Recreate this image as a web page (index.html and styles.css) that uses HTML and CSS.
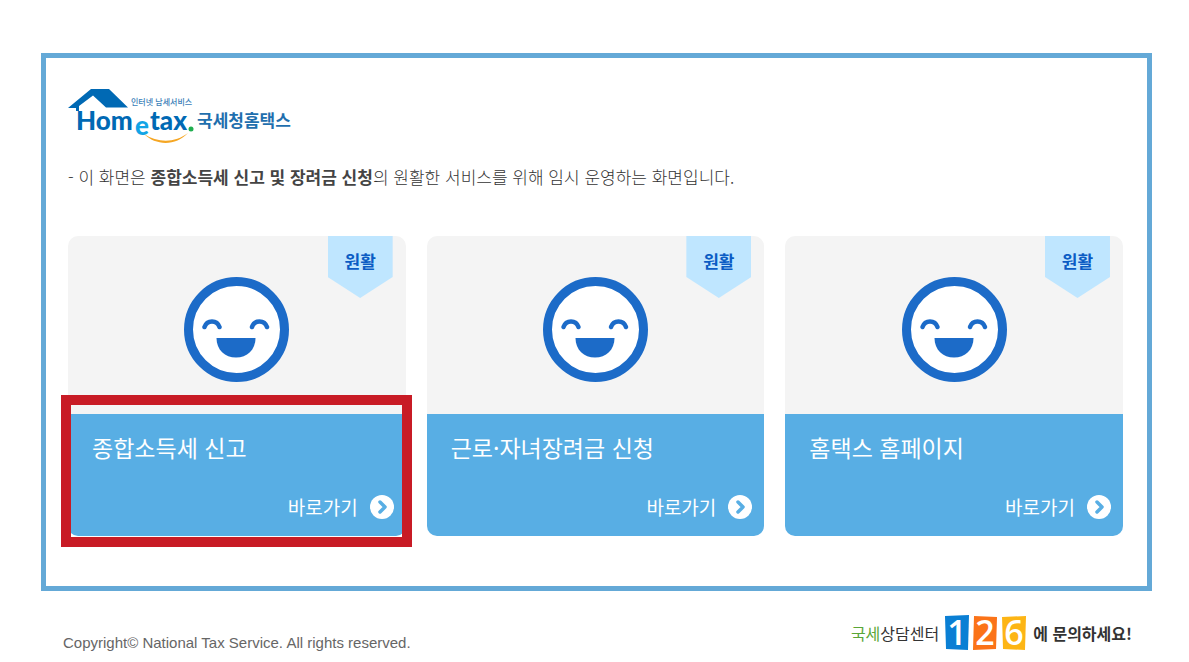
FILE: index.html
```html
<!DOCTYPE html>
<html lang="ko">
<head>
    <meta charset="utf-8">
    <title>국세청홈택스</title>
    <meta name="viewport" content="width=device-width, initial-scale=1">
    <link rel="stylesheet" href="styles.css">
</head>
<body>
    <!-- shared icons -->
    <svg class="sprite" width="0" height="0" aria-hidden="true">
        <symbol id="face" viewBox="0 0 105 105">
            <circle cx="52.5" cy="52.5" r="48" fill="#fff" stroke="#1c6bc8" stroke-width="9"/>
            <path d="M20.500 50C23 42.500 33 42.500 35.500 50M68 50C70.500 42.500 80.500 42.500 83 50" fill="none" stroke="#1c6bc8" stroke-width="4.500" stroke-linecap="round"/>
            <path d="M32.500 61H71.500C71.500 73 63 80.500 52 80.500S32.500 73 32.500 61Z" fill="#1c6bc8"/>
        </symbol>
        <symbol id="go" viewBox="0 0 24 24">
            <circle cx="12" cy="12" r="12" fill="#fff"/>
            <path d="M10 7L15 12L10 17" fill="none" stroke="#58aee4" stroke-width="3.500" stroke-linecap="round" stroke-linejoin="round"/>
        </symbol>
    </svg>

    <main class="container">
        <h1 class="logo">
            <svg width="226" height="56" viewBox="0 0 226 56" role="img" aria-label="Hometax 국세청홈택스">
                <path d="M0 20L23 1H41L60 19.500H38L25 7.500L11 18V23H8V20Z" fill="#0069b4"/>
                <text class="logo-en" x="8" y="42">Hom</text>
                <text class="logo-e" x="67" y="47">e</text>
                <text class="logo-en" x="82" y="42">tax</text>
                <circle cx="123" cy="41" r="2.500" fill="#1fae4f"/>
                <path d="M76 46C90 55 107 55 120 45C108 58 88 58 76 46Z" fill="#f5a623"/>
                <text class="logo-sub" x="63" y="17">인터넷 납세서비스</text>
                <text class="logo-ko" x="129" y="39">국세청홈택스</text>
            </svg>
        </h1>

        <p class="notice">- 이 화면은 <strong>종합소득세 신고 및 장려금 신청</strong>의 원활한 서비스를 위해 임시 운영하는 화면입니다.</p>

        <div class="cards">
            <a class="card selected" href="#">
                <span class="card-top">
                    <span class="badge">원활</span>
                    <svg class="face" aria-hidden="true"><use href="#face"/></svg>
                </span>
                <span class="card-bottom">
                    <span class="card-title">종합소득세 신고</span>
                    <span class="card-go">바로가기 <svg class="go" aria-hidden="true"><use href="#go"/></svg></span>
                </span>
            </a>
            <a class="card" href="#">
                <span class="card-top">
                    <span class="badge">원활</span>
                    <svg class="face" aria-hidden="true"><use href="#face"/></svg>
                </span>
                <span class="card-bottom">
                    <span class="card-title">근로·자녀장려금 신청</span>
                    <span class="card-go">바로가기 <svg class="go" aria-hidden="true"><use href="#go"/></svg></span>
                </span>
            </a>
            <a class="card" href="#">
                <span class="card-top">
                    <span class="badge">원활</span>
                    <svg class="face" aria-hidden="true"><use href="#face"/></svg>
                </span>
                <span class="card-bottom">
                    <span class="card-title">홈택스 홈페이지</span>
                    <span class="card-go">바로가기 <svg class="go" aria-hidden="true"><use href="#go"/></svg></span>
                </span>
            </a>
        </div>
    </main>

    <footer class="footer">
        <p class="copyright">Copyright© National Tax Service. All rights reserved.</p>
        <p class="callcenter">
            <span class="center-name"><em>국세</em>상담센터</span>
            <svg width="84" height="52" viewBox="0 -8 84 52" role="img" aria-label="126">
                <path d="M1 1L25 0L24 35L2 34Z" fill="#0a7fd4"/>
                <path d="M30 1L53 2L52 34L29 35Z" fill="#fb7318"/>
                <path d="M58 2L82 1L81 35L59 34Z" fill="#fdb515"/>
                <text class="digit" x="13" y="30">1</text>
                <text class="digit" x="41" y="30">2</text>
                <text class="digit" x="70" y="30">6</text>
            </svg>
            <span class="center-ask">에 문의하세요!</span>
        </p>
    </footer>
</body>
</html>
```

FILE: styles.css
```css
body {
    font-family: "Noto Sans CJK KR", sans-serif;
    margin: 0;
    background: #fff;
    color: #333;
}
.sprite {
    position: absolute;
}
.container {
    margin: 53px 37px 0 41px;
    padding: 30px 24px 50px 22px;
    border: 5px solid #64a9d7;
}
.logo {
    margin: 0;
    height: 56px;
}
.logo svg {
    display: block;
}
.logo-en,
.logo-e {
    font-family: Lato, sans-serif;
    font-weight: 900;
    font-size: 26px;
    fill: #0069b4;
}
.logo-e {
    fill: #12a5e6;
}
.logo-sub {
    font-size: 8px;
    font-weight: 500;
    fill: #3a80b8;
}
.logo-ko {
    font-size: 17px;
    font-weight: bold;
    fill: #1f6fae;
}
.notice {
    margin: 20px 0 47px;
    font-size: 17px;
    line-height: 25px;
    font-weight: 300;
}
.notice strong {
    font-weight: bold;
    color: #444;
}

/* cards */
.cards {
    display: grid;
    grid-template-columns: repeat(3, 1fr);
    gap: 21px;
}
.card {
    position: relative;
    display: block;
    color: #fff;
    text-decoration: none;
}
.card-top {
    display: flex;
    justify-content: center;
    padding: 41px 0 32px;
    background: #f4f4f4;
    border-radius: 10px 10px 0 0;
}
.face {
    width: 105px;
    height: 105px;
}
.badge {
    position: absolute;
    top: 0;
    right: 13px;
    width: 65px;
    height: 62px;
    background: #bfe6ff;
    clip-path: polygon(0 0, 100% 0, 100% 66%, 50% 100%, 0 66%);
    color: #0b5cc4;
    font-size: 17px;
    font-weight: bold;
    line-height: 50px;
    text-align: center;
}
.card-bottom {
    display: flex;
    flex-direction: column;
    gap: 30px;
    padding: 17px 12px 15px 24px;
    background: #58aee4;
    border-radius: 0 0 10px 10px;
}
.card-title {
    font-size: 23px;
    line-height: 32px;
}
.card-go {
    display: flex;
    justify-content: flex-end;
    align-items: center;
    gap: 12px;
    font-size: 19px;
    line-height: 28px;
}
.go {
    width: 24px;
    height: 24px;
}
.selected::after {
    content: "";
    position: absolute;
    top: 159px;
    right: -6px;
    bottom: -11px;
    left: -7px;
    border: 10px solid #c81b25;
}

/* footer */
.footer {
    display: flex;
    justify-content: space-between;
    padding: 16px 57px 3px 63px;
}
.copyright {
    margin: 26px 0 0;
    font-family: "Liberation Sans", sans-serif;
    font-size: 15px;
    line-height: 20px;
    color: #666;
}
.callcenter {
    display: flex;
    align-items: center;
    gap: 5px;
    margin: 0;
    font-size: 16px;
}
.center-name em {
    color: #5aa637;
    font-style: normal;
}
.center-ask {
    font-weight: bold;
}
.digit {
    font-family: "Open Sans", sans-serif;
    font-size: 34px;
    font-weight: 600;
    fill: #fff;
    text-anchor: middle;
}
```
